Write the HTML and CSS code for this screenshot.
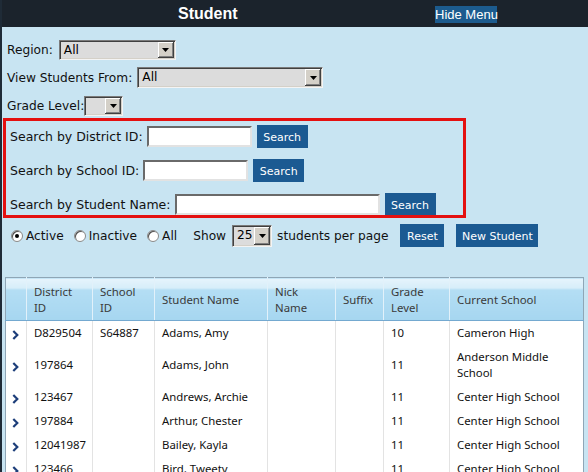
FILE: index.html
```html
<!DOCTYPE html>
<html>
<head>
<meta charset="utf-8">
<title>Student</title>
<link rel="stylesheet" href="styles.css">
</head>
<body>
<div class="page">
  <header class="topbar">
    <span class="title">Student</span>
    <span class="hide">Hide Menu</span>
  </header>

  <div class="filters">
    <div class="frow">
      <span class="lbl gap6">Region:</span>
      <div class="sel sel-region"><span class="val">All</span><span class="arr"><svg width="7" height="4" viewBox="0 0 7 4"><polygon points="0,0 7,0 3.5,4" fill="#000"/></svg></span></div>
    </div>
    <div class="frow">
      <span class="lbl gap4">View Students From:</span>
      <div class="sel sel-view"><span class="val">All</span><span class="arr"><svg width="7" height="4" viewBox="0 0 7 4"><polygon points="0,0 7,0 3.5,4" fill="#000"/></svg></span></div>
    </div>
    <div class="frow">
      <span class="lbl">Grade Level:</span>
      <div class="sel sel-grade"><span class="val"></span><span class="arr"><svg width="7" height="4" viewBox="0 0 7 4"><polygon points="0,0 7,0 3.5,4" fill="#000"/></svg></span></div>
    </div>
  </div>

  <div class="searchbox">
    <div class="srow">
      <span class="lbl">Search by District ID:</span>
      <span class="inp inp-id"></span>
      <span class="btn btn-search">Search</span>
    </div>
    <div class="srow">
      <span class="lbl">Search by School ID:</span>
      <span class="inp inp-id"></span>
      <span class="btn btn-search">Search</span>
    </div>
    <div class="srow">
      <span class="lbl">Search by Student Name:</span>
      <span class="inp inp-name"></span>
      <span class="btn btn-search">Search</span>
    </div>
  </div>

  <div class="opts">
    <span class="radio checked"></span><span class="rlbl">Active</span>
    <span class="radio"></span><span class="rlbl">Inactive</span>
    <span class="radio"></span><span class="rlbl">All</span>
    <span class="show">Show</span>
    <div class="sel sel-show"><span class="val">25</span><span class="arr"><svg width="7" height="4" viewBox="0 0 7 4"><polygon points="0,0 7,0 3.5,4" fill="#000"/></svg></span></div>
    <span class="per">students per page</span>
    <span class="btn btn-reset">Reset</span>
    <span class="btn btn-new">New Student</span>
  </div>

  <table class="grid">
    <colgroup>
      <col class="c0"><col class="c1"><col class="c2"><col class="c3"><col class="c4"><col class="c5"><col class="c6"><col class="c7">
    </colgroup>
    <thead>
      <tr>
        <th></th>
        <th>District<br>ID</th>
        <th>School<br>ID</th>
        <th>Student Name</th>
        <th>Nick<br>Name</th>
        <th>Suffix</th>
        <th>Grade<br>Level</th>
        <th>Current School</th>
      </tr>
    </thead>
    <tbody>
      <tr>
        <td class="go"><svg width="7" height="10" viewBox="0 0 7 10"><polyline points="1.3,1 5.3,5 1.3,9" fill="none" stroke="#1d3e7a" stroke-width="2.2"/></svg></td>
        <td>D829504</td><td>S64887</td><td>Adams, Amy</td><td></td><td></td><td>10</td><td>Cameron High</td>
      </tr>
      <tr>
        <td class="go"><svg width="7" height="10" viewBox="0 0 7 10"><polyline points="1.3,1 5.3,5 1.3,9" fill="none" stroke="#1d3e7a" stroke-width="2.2"/></svg></td>
        <td>197864</td><td></td><td>Adams, John</td><td></td><td></td><td>11</td><td>Anderson Middle School</td>
      </tr>
      <tr>
        <td class="go"><svg width="7" height="10" viewBox="0 0 7 10"><polyline points="1.3,1 5.3,5 1.3,9" fill="none" stroke="#1d3e7a" stroke-width="2.2"/></svg></td>
        <td>123467</td><td></td><td>Andrews, Archie</td><td></td><td></td><td>11</td><td>Center High School</td>
      </tr>
      <tr>
        <td class="go"><svg width="7" height="10" viewBox="0 0 7 10"><polyline points="1.3,1 5.3,5 1.3,9" fill="none" stroke="#1d3e7a" stroke-width="2.2"/></svg></td>
        <td>197884</td><td></td><td>Arthur, Chester</td><td></td><td></td><td>11</td><td>Center High School</td>
      </tr>
      <tr>
        <td class="go"><svg width="7" height="10" viewBox="0 0 7 10"><polyline points="1.3,1 5.3,5 1.3,9" fill="none" stroke="#1d3e7a" stroke-width="2.2"/></svg></td>
        <td>12041987</td><td></td><td>Bailey, Kayla</td><td></td><td></td><td>11</td><td>Center High School</td>
      </tr>
      <tr>
        <td class="go"><svg width="7" height="10" viewBox="0 0 7 10"><polyline points="1.3,1 5.3,5 1.3,9" fill="none" stroke="#1d3e7a" stroke-width="2.2"/></svg></td>
        <td>123466</td><td></td><td>Bird, Tweety</td><td></td><td></td><td>11</td><td>Center High School</td>
      </tr>
    </tbody>
  </table>
</div>
</body>
</html>
```

FILE: styles.css
```css
* { box-sizing: border-box; }

html, body {
  margin: 0;
  padding: 0;
  background: #c8e4f2;
}

body {
  font-family: "DejaVu Sans", Verdana, sans-serif;
  font-size: 12.2px;
  color: #111;
}

.page {
  width: 588px;
  border-left: 2px solid #1f2b37;
  min-height: 472px;
  overflow: hidden;
}

/* top bar */
.topbar {
  height: 27px;
  background: #1b232c;
  display: flex;
  align-items: center;
  padding-left: 176px;
}

.title {
  font-family: "Liberation Sans", Arial, sans-serif;
  font-weight: bold;
  font-size: 16px;
  color: #fff;
}

.hide {
  margin-left: auto;
  margin-right: 91px;
  margin-top: 1px;
  background: #1c5b8e;
  color: #fff;
  font-family: "Liberation Sans", Arial, sans-serif;
  font-size: 13px;
  line-height: 17px;
  height: 17px;
  width: 62px;
  text-align: center;
  white-space: nowrap;
}

/* filters */
.filters {
  padding: 12px 0 0 5px;
  display: flex;
  flex-direction: column;
  gap: 7px;
}

.frow {
  display: flex;
  align-items: center;
  height: 21px;
}

.frow > *, .srow > *, .opts > * { flex-shrink: 0; }

.gap6 { margin-right: 6px; }
.gap4 { margin-right: 5px; }

.sel {
  display: flex;
  align-items: stretch;
  height: 21px;
  background: #dcdcdc;
  border: 1px solid;
  border-color: #7b7b7b #f4f4f4 #f4f4f4 #7b7b7b;
  box-shadow: inset 1px 1px 0 #404040, inset -1px -1px 0 #d4d0c8;
  padding: 1px;
}

.sel .val {
  flex: 1;
  padding-left: 3px;
  line-height: 17px;
  font-size: 12.2px;
  color: #000;
}

.sel .arr {
  width: 16px;
  flex-shrink: 0;
  background: #d4d0c8;
  display: flex;
  align-items: center;
  justify-content: center;
  box-shadow: inset -1px -1px 0 #404040, inset 1px 1px 0 #fff, inset -2px -2px 0 #808080;
}

.sel-region { width: 117px; height: 20px; }
.sel-view { width: 186px; }
.sel-grade { width: 39px; height: 20px; }
.sel-show { width: 40px; height: 22px; margin-right: 5px; }

/* red search box */
.searchbox {
  margin: 2px 0 0 1px;
  width: 463px;
  height: 100px;
  border: 3px solid #e41010;
  padding: 4px 0 0 4px;
  display: flex;
  flex-direction: column;
  gap: 12px;
  overflow: hidden;
}

.srow {
  display: flex;
  align-items: center;
  height: 22px;
  font-size: 12.5px;
}

.srow .lbl { margin-right: 4px; }

.inp {
  display: block;
  height: 21px;
  background: #fff;
  border: 2px solid;
  border-color: #6a6a6a #e2e2e2 #e2e2e2 #6a6a6a;
  margin-right: 5px;
}

.inp-id { width: 105px; }
.inp-name { width: 205px; }

.btn {
  display: inline-flex;
  align-items: center;
  justify-content: center;
  background: #1b5a92;
  color: #fff;
  font-size: 11px;
  padding-top: 2px;
  white-space: nowrap;
}

.btn-search { width: 51px; height: 23px; }
.btn-reset { width: 44px; height: 23px; margin-right: 12px; }
.btn-new { width: 82px; height: 23px; }

/* options row */
.opts {
  margin-top: 6px;
  height: 23px;
  display: flex;
  align-items: center;
  padding-left: 9px;
}

.radio {
  width: 12px;
  height: 12px;
  border-radius: 50%;
  background: #fff;
  border: 1px solid #8a8a8a;
  box-shadow: inset 1px 1px 0 #505050;
  position: relative;
  margin-right: 3px;
}

.radio.checked::after {
  content: "";
  position: absolute;
  left: 3px;
  top: 3px;
  width: 4px;
  height: 4px;
  border-radius: 50%;
  background: #000;
}

.rlbl { margin-right: 10px; }
.show { margin-left: 6px; margin-right: 6px; }
.per { margin-right: 12px; }

/* table */
.grid {
  margin: 30px 0 0 3px;
  width: 579px;
  border-collapse: collapse;
  table-layout: fixed;
  border: 1px solid #8fa6b6;
  font-family: "Noto Sans", "Open Sans", sans-serif;
  font-size: 11.4px;
  background: #fff;
}

.c0 { width: 21px; }
.c1 { width: 66px; }
.c2 { width: 62px; }
.c3 { width: 113px; }
.c4 { width: 68px; }
.c5 { width: 48px; }
.c6 { width: 66px; }

.grid th {
  text-align: left;
  font-weight: normal;
  color: #3a3a3a;
  line-height: 16px;
  padding: 6px 7px 4px 7px;
  vertical-align: middle;
  background: linear-gradient(#e6f4fc 0, #d6edf9 10px, #b4def4 11px, #a6d6f0 100%);
  border-left: 1px solid #e2f1fa;
  border-bottom: 1px solid #74a9d0;
}

.grid td {
  line-height: 16px;
  padding: 4px 7px;
  vertical-align: middle;
  color: #111;
  border-left: 1px solid #e3e3e3;
}

.grid th:first-child,
.grid td:first-child {
  border-left: none;
}

.grid th:last-child,
.grid td:last-child {
  border-right: 1px solid #8fa6b6;
}

.grid td.go {
  padding: 4px 0 0 6px;
}

.grid td.go svg { display: block; }
```
